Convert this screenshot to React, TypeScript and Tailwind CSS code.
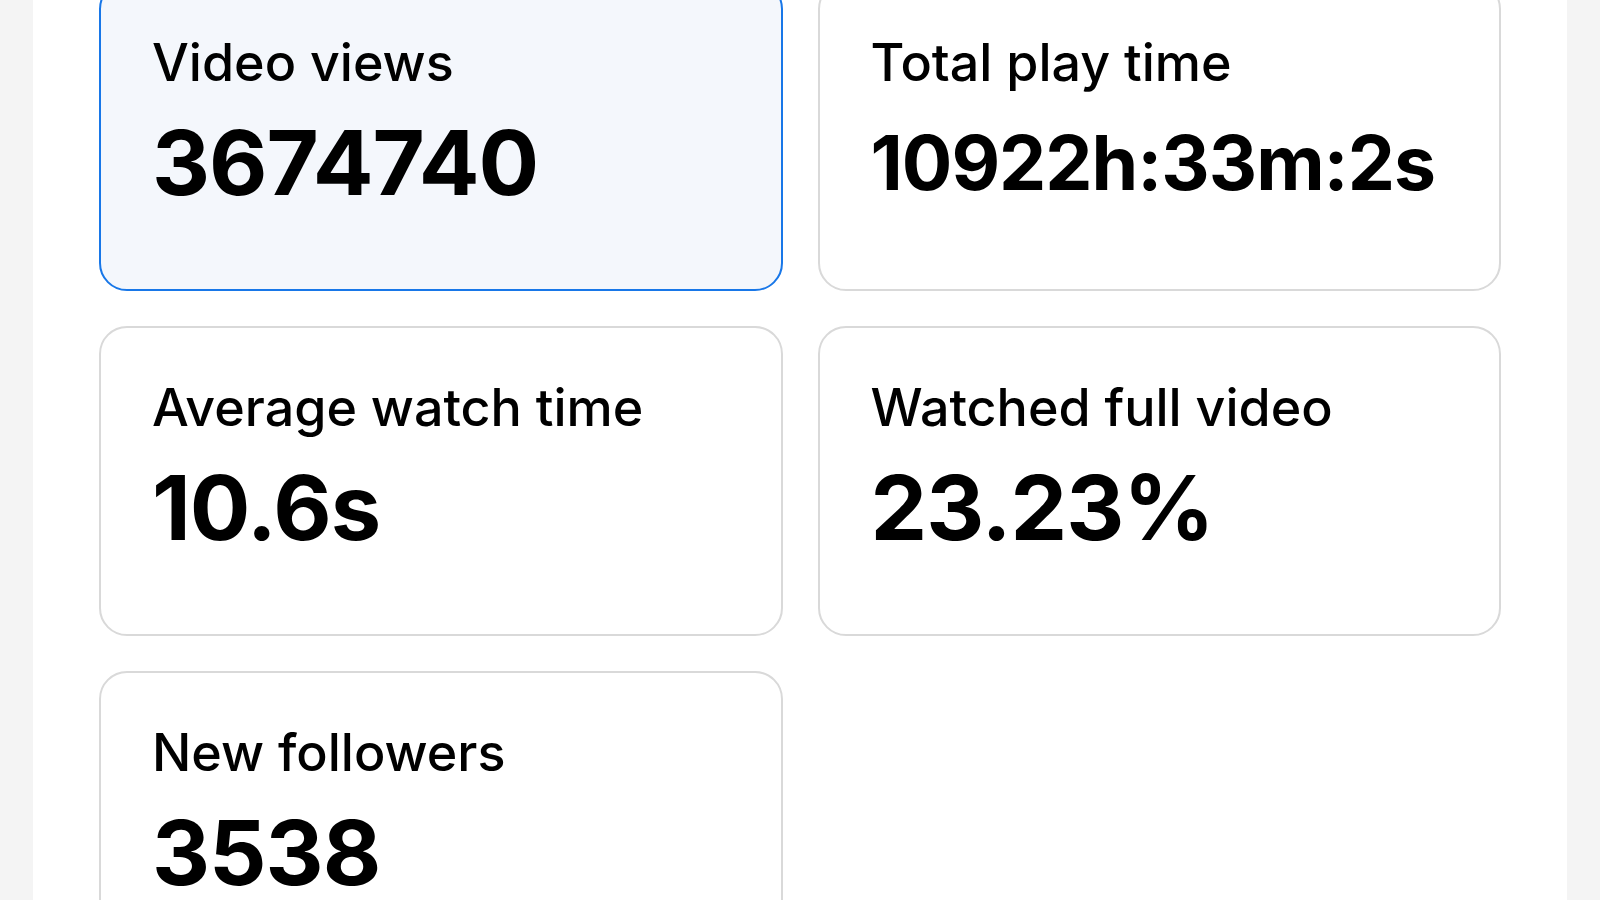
import React from 'react';

type Stat = {
  label: string;
  value: string;
  selected?: boolean;
  small?: boolean;
};

const stats: Stat[] = [
  { label: 'Video views', value: '3674740', selected: true },
  { label: 'Total play time', value: '10922h:33m:2s', small: true },
  { label: 'Average watch time', value: '10.6s' },
  { label: 'Watched full video', value: '23.23%' },
  { label: 'New followers', value: '3538' },
];

const StatCard = ({ label, value, selected, small }: Stat) => (
  <div
    className={
      selected
        ? 'h-[310px] rounded-[28px] border-2 border-[#1877e8] bg-[#f4f7fc] pl-[51px] pt-[53px]'
        : 'h-[310px] rounded-[28px] border-2 border-[#d9d9d9] bg-white pl-[51px] pt-[53px]'
    }
  >
    <div className="text-[52px] font-medium leading-[54px] text-black">{label}</div>
    <div
      className={
        small
          ? 'mt-[28px] text-[75px] font-bold leading-[90px] tracking-[-1px] text-black'
          : 'mt-[28px] text-[90px] font-bold leading-[90px] tracking-[-1px] text-black'
      }
    >
      {value}
    </div>
  </div>
);

export default function App() {
  return (
    <div
      className="flex h-[900px] w-full overflow-hidden bg-[#f4f4f4]"
      style={{ fontFamily: 'Inter, "Liberation Sans", sans-serif' }}
    >
      <div className="mx-[33px] flex-1 overflow-hidden bg-white px-[66px]">
        <div className="-mt-[19px] grid grid-cols-2 gap-x-[35px] gap-y-[35px]">
          {stats.map((stat) => (
            <StatCard key={stat.label} {...stat} />
          ))}
        </div>
      </div>
    </div>
  );
}
